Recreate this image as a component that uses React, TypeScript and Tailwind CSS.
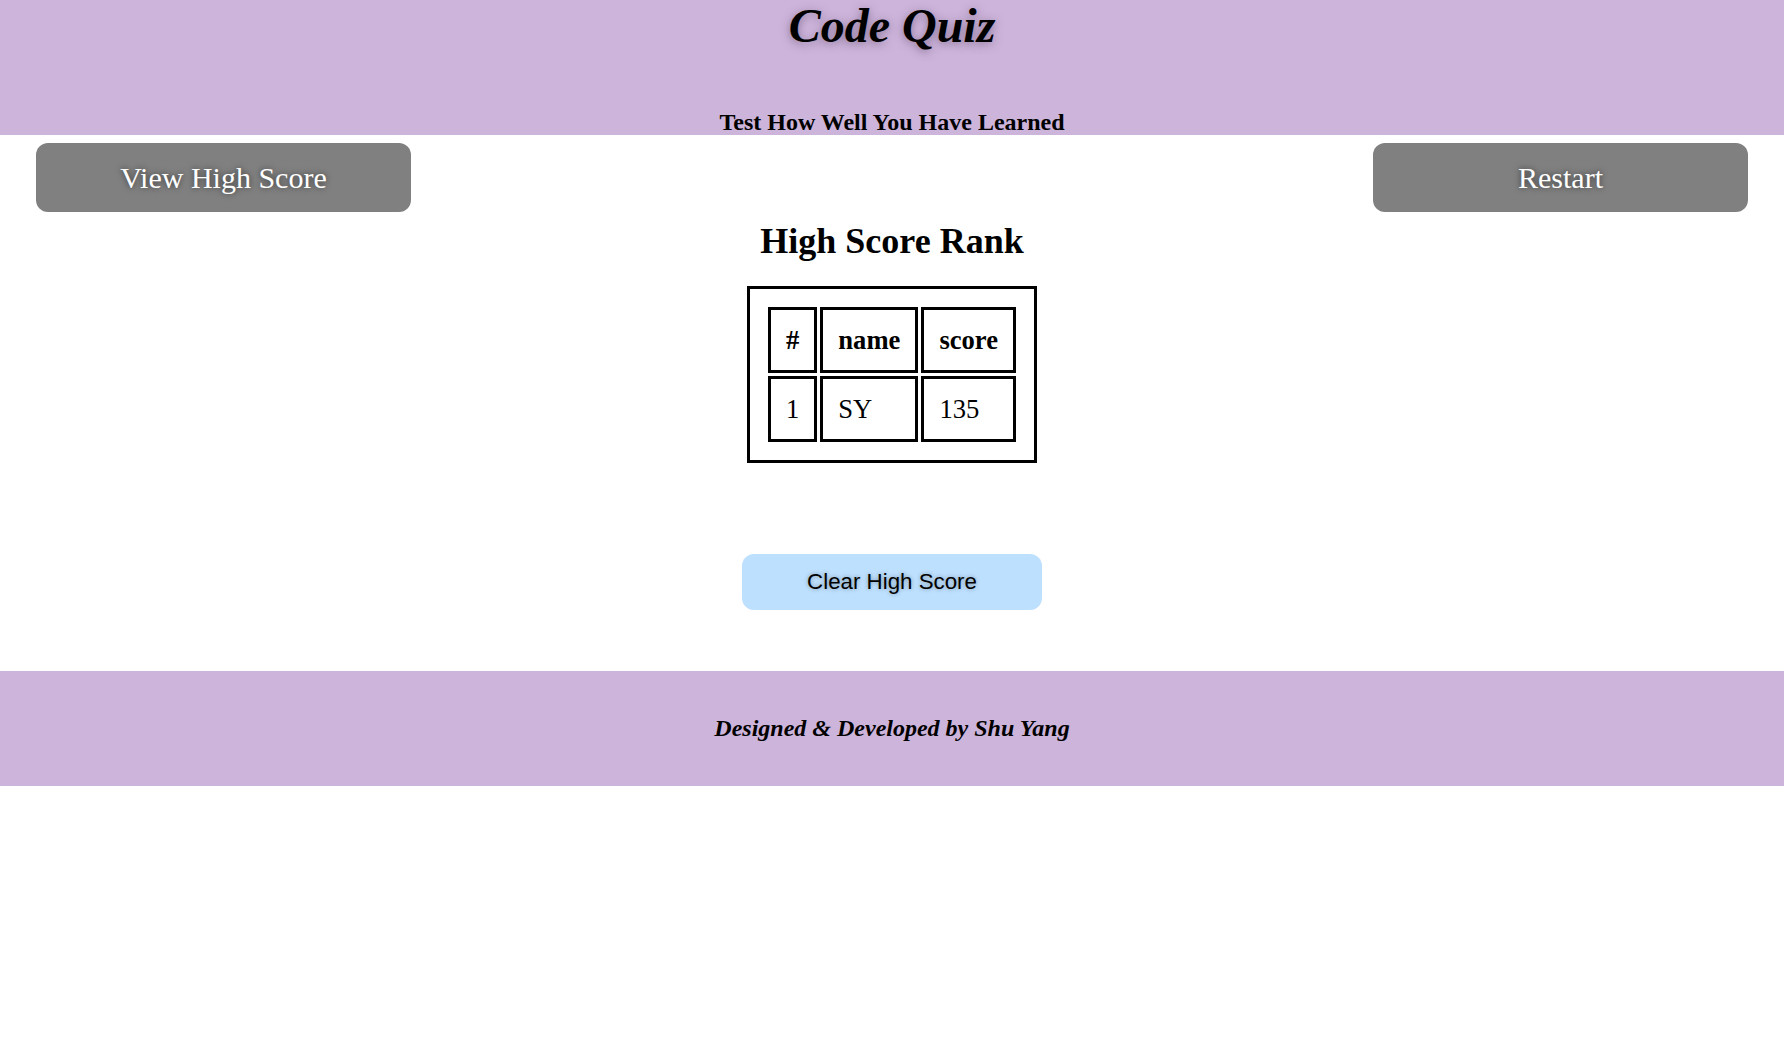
export default function App() {
  const scores = [{ rank: 1, name: "SY", score: 135 }];

  return (
    <div className="min-h-screen bg-white font-['Liberation_Serif',serif] text-black">
      <header className="h-[135px] bg-[#cdb4db] text-center">
        <h1 className="pt-[2px] text-[48px] font-bold italic leading-none [text-shadow:0_2px_10px_rgba(80,60,90,0.55)]">
          Code Quiz
        </h1>
        <h3 className="mt-[60px] text-[24px] font-bold leading-none">
          Test How Well You Have Learned
        </h3>
      </header>

      <nav className="mt-[8px] flex justify-between px-[36px]">
        <button className="h-[69px] w-[375px] rounded-[12px] bg-[#808080] text-[30px] text-white [text-shadow:0_0_6px_rgba(0,0,0,0.6)]">
          View High Score
        </button>
        <button className="h-[69px] w-[375px] rounded-[12px] bg-[#808080] text-[30px] text-white [text-shadow:0_0_6px_rgba(0,0,0,0.6)]">
          Restart
        </button>
      </nav>

      <main className="flex flex-col items-center">
        <h2 className="mt-[9px] text-[36px] font-bold leading-[41px]">
          High Score Rank
        </h2>

        <table className="mt-[24px] border-separate border-spacing-[3px] border-[3px] border-black p-[15px] text-[26.6px] leading-[30px]">
          <thead>
            <tr>
              <th className="border-[3px] border-black p-[15px]">#</th>
              <th className="border-[3px] border-black p-[15px]">name</th>
              <th className="border-[3px] border-black p-[15px]">score</th>
            </tr>
          </thead>
          <tbody>
            {scores.map((s) => (
              <tr key={s.rank}>
                <td className="border-[3px] border-black p-[15px] text-left">{s.rank}</td>
                <td className="border-[3px] border-black p-[15px] text-left">{s.name}</td>
                <td className="border-[3px] border-black p-[15px] text-left">{s.score}</td>
              </tr>
            ))}
          </tbody>
        </table>

        <button className="mt-[91px] h-[56px] w-[300px] rounded-[12px] bg-[#bde0fe] font-['Liberation_Sans',Arial,sans-serif] text-[22.3px] text-black [text-shadow:0_0_4px_rgba(0,0,0,0.35)]">
          Clear High Score
        </button>
      </main>

      <footer className="mt-[61px] bg-[#cdb4db] pt-[44px] pb-[44px] text-center">
        <h4 className="text-[24px] font-bold italic leading-[27px]">
          Designed &amp; Developed by Shu Yang
        </h4>
      </footer>
    </div>
  );
}
